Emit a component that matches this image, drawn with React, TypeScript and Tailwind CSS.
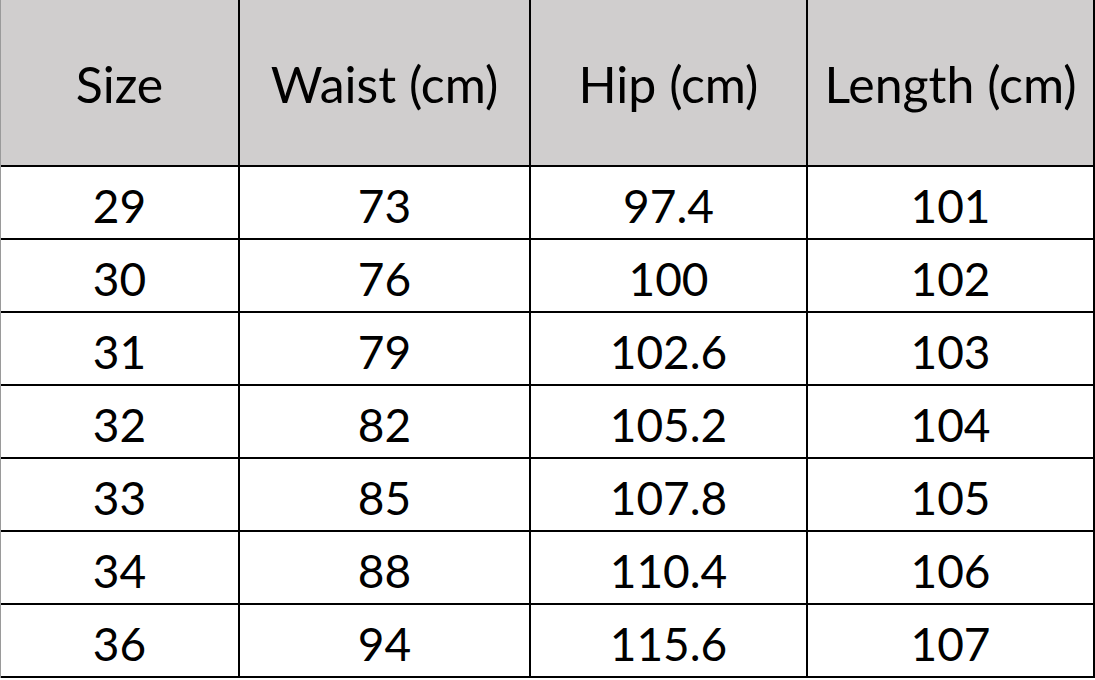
const headers = ['Size', 'Waist (cm)', 'Hip (cm)', 'Length (cm)']

const rows = [
  ['29', '73', '97.4', '101'],
  ['30', '76', '100', '102'],
  ['31', '79', '102.6', '103'],
  ['32', '82', '105.2', '104'],
  ['33', '85', '107.8', '105'],
  ['34', '88', '110.4', '106'],
  ['36', '94', '115.6', '107'],
]

export default function App() {
  return (
    <div className="h-[680px] w-[1095px] bg-white font-['Lato','Open_Sans',sans-serif] text-[46px] text-black">
      <div className="grid w-[1094px] grid-cols-[239px_291px_277px_287px] border-l border-l-[#9a9a9a]">
        {headers.map((h) => (
          <div
            key={h}
            className="flex h-[167px] items-center justify-center border-r-2 border-b-2 border-black bg-[#d0cece] pt-1 text-[50px]"
          >
            {h}
          </div>
        ))}
        {rows.map((r) =>
          r.map((v, i) => (
            <div
              key={r[0] + '-' + i}
              className="flex h-[73px] items-center justify-center border-r-2 border-b-2 border-black pt-1.5"
            >
              {v}
            </div>
          )),
        )}
      </div>
    </div>
  )
}
